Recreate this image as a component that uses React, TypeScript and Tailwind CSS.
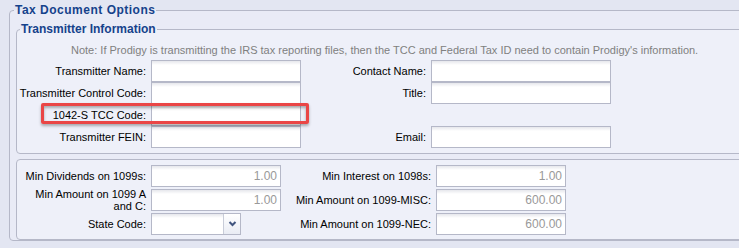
import type { ReactNode } from "react";

const font = "font-['Liberation_Sans',Arial,sans-serif]";
const inputClass =
  "h-[22px] border border-[#b5b8c8] bg-[linear-gradient(to_bottom,#e6e7ec,#ffffff_4px)] text-[12px] text-[#999] text-right pr-[3px] leading-[20px]";

const LabelBox = ({ children, widthClass }: { children: ReactNode; widthClass: string }) => (
  <div className={`${widthClass} flex shrink-0 items-center justify-end pr-[5px] text-right text-[11px] leading-[12px] text-black`}>
    <span className="whitespace-nowrap">{children}</span>
  </div>
);

const TextInput = ({ widthClass, value }: { widthClass: string; value?: string }) => (
  <div className={`${widthClass} ${inputClass} shrink-0`}>{value}</div>
);

const ComboBox = () => (
  <div className="flex h-[22px] w-[90px] shrink-0 border border-[#b5b8c8] bg-[linear-gradient(to_bottom,#e6e7ec,#ffffff_4px)]">
    <div className="flex-1" />
    <div className="flex w-[17px] items-center justify-center border-l border-[#c8ccd8] bg-[linear-gradient(to_bottom,#ffffff,#e9ecf4)]">
      <svg width="9" height="6" viewBox="0 0 9 6">
        <path d="M1.5 1 L4.5 4 L7.5 1" fill="none" stroke="#41557f" strokeWidth="2" />
      </svg>
    </div>
  </div>
);

export default function App() {
  return (
    <div className={`h-[248px] w-[739px] overflow-hidden bg-[#e3e6f2] pl-[9px] pt-[3px] ${font}`}>
      <fieldset className="w-[800px] rounded-[4px] border border-[#b5b8c8] bg-[#e9ebf6] pl-[6px] pt-[5px]">
        <legend className="ml-[-2px] px-[1px] text-[12px] font-bold leading-[14px] tracking-[0.5px] text-[#15428b]">
          Tax Document Options
        </legend>

        <fieldset className="rounded-[4px] border border-[#b5b8c8] bg-[#eef0f9] pb-[5px] pl-[4px]">
          <legend className="ml-[-1px] px-[1px] text-[12px] font-bold leading-[14px] text-[#15428b]">
            Transmitter Information
          </legend>
          <div className="mt-[8px] h-[13px] pl-[50px] text-[11px] leading-[13px] text-[#808080] whitespace-nowrap">
            Note: If Prodigy is transmitting the IRS tax reporting files, then the TCC and Federal Tax ID need to contain Prodigy's information.
          </div>
          <div className="mt-[3px] flex flex-col">
            <div className="flex h-[22px]">
              <LabelBox widthClass="w-[130px]">Transmitter Name:</LabelBox>
              <TextInput widthClass="w-[150px]" />
              <LabelBox widthClass="w-[130px]">Contact Name:</LabelBox>
              <TextInput widthClass="w-[180px]" />
            </div>
            <div className="flex h-[22px]">
              <LabelBox widthClass="w-[130px]">Transmitter Control Code:</LabelBox>
              <TextInput widthClass="w-[150px]" />
              <LabelBox widthClass="w-[130px]">Title:</LabelBox>
              <TextInput widthClass="w-[180px]" />
            </div>
            <div className="relative flex h-[22px]">
              <LabelBox widthClass="w-[130px]">1042-S TCC Code:</LabelBox>
              <TextInput widthClass="w-[150px]" />
              <div className="pointer-events-none absolute left-[20px] top-[-1px] h-[21px] w-[268px] rounded-[2px] border-[3px] border-[#ea4646] shadow-[0_2px_3px_rgba(0,0,0,0.3),inset_0_2px_3px_rgba(0,0,0,0.3)]" />
            </div>
            <div className="flex h-[22px]">
              <LabelBox widthClass="w-[130px]">Transmitter FEIN:</LabelBox>
              <TextInput widthClass="w-[150px]" />
              <LabelBox widthClass="w-[130px]">Email:</LabelBox>
              <TextInput widthClass="w-[180px]" />
            </div>
          </div>
        </fieldset>

        <fieldset className="mt-[5px] rounded-[4px] border border-[#b5b8c8] bg-[#eef0f9] pb-[4px] pl-[4px] pt-[5px]">
          <div className="flex flex-col gap-[2px]">
            <div className="flex h-[22px]">
              <LabelBox widthClass="w-[130px]">Min Dividends on 1099s:</LabelBox>
              <TextInput widthClass="w-[130px]" value="1.00" />
              <LabelBox widthClass="w-[155px]">Min Interest on 1098s:</LabelBox>
              <TextInput widthClass="w-[130px]" value="1.00" />
            </div>
            <div className="flex h-[22px]">
              <div className="flex w-[130px] shrink-0 items-center justify-end pr-[5px]">
                <span className="w-[112px] text-right text-[11px] leading-[12px] text-black">
                  Min Amount on 1099 A and C:
                </span>
              </div>
              <TextInput widthClass="w-[130px]" value="1.00" />
              <LabelBox widthClass="w-[155px]">Min Amount on 1099-MISC:</LabelBox>
              <TextInput widthClass="w-[130px]" value="600.00" />
            </div>
            <div className="flex h-[22px]">
              <LabelBox widthClass="w-[130px]">State Code:</LabelBox>
              <ComboBox />
              <div className="w-[40px] shrink-0" />
              <LabelBox widthClass="w-[155px]">Min Amount on 1099-NEC:</LabelBox>
              <TextInput widthClass="w-[130px]" value="600.00" />
            </div>
          </div>
        </fieldset>
      </fieldset>
    </div>
  );
}
